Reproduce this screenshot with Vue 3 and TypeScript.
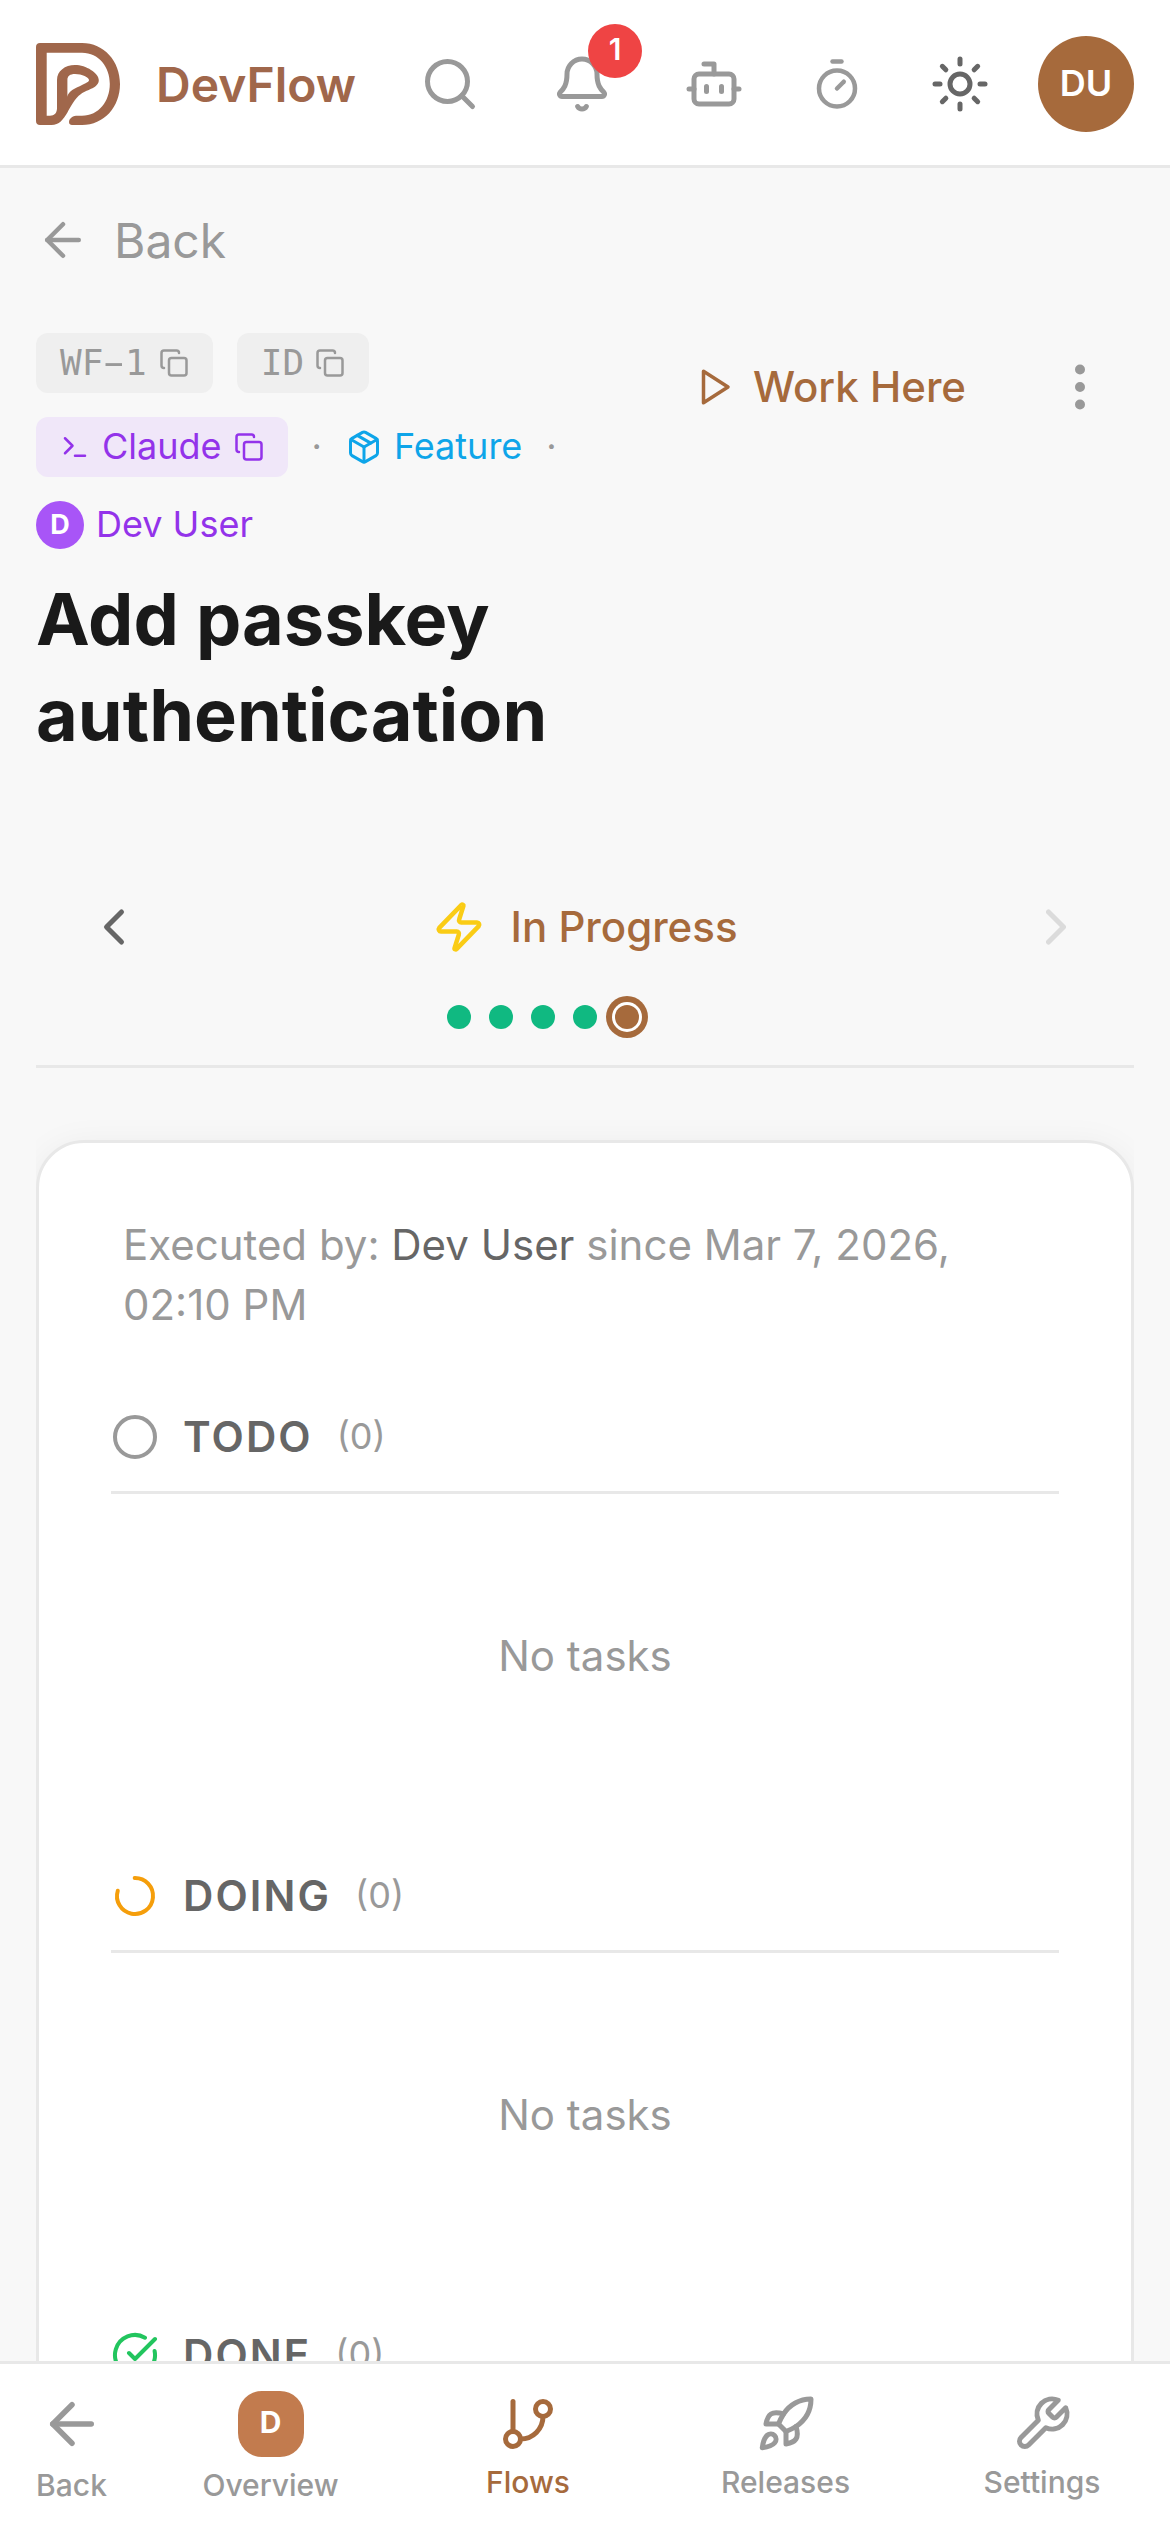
<script setup lang="ts">
interface Section {
  key: string
  label: string
  icon: string
  count: number
}

interface NavItem {
  label: string
  icon?: string
  initial?: string
  active?: boolean
}

const icons: Record<string, string> = {
  search: '<circle cx="11" cy="11" r="8"/><path d="m21 21-4.3-4.3"/>',
  bell: '<path d="M10.268 21a2 2 0 0 0 3.464 0"/><path d="M3.262 15.326A1 1 0 0 0 4 17h16a1 1 0 0 0 .74-1.673C19.41 13.956 18 12.499 18 8A6 6 0 0 0 6 8c0 4.499-1.411 5.956-2.738 7.326"/>',
  bot: '<path d="M12 8V4H8"/><rect width="16" height="12" x="4" y="8" rx="2"/><path d="M2 14h2"/><path d="M20 14h2"/><path d="M15 13v2"/><path d="M9 13v2"/>',
  timer: '<path d="M10 2h4"/><path d="m12 14 3-3"/><circle cx="12" cy="14" r="8"/>',
  sun: '<circle cx="12" cy="12" r="4"/><path d="M12 2v2"/><path d="M12 20v2"/><path d="m4.93 4.93 1.41 1.41"/><path d="m17.66 17.66 1.41 1.41"/><path d="M2 12h2"/><path d="M20 12h2"/><path d="m6.34 17.66-1.41 1.41"/><path d="m19.07 4.93-1.41 1.41"/>',
  arrowLeft: '<path d="m12 19-7-7 7-7"/><path d="M19 12H5"/>',
  copy: '<rect width="14" height="14" x="8" y="8" rx="2"/><path d="M4 16c-1.1 0-2-.9-2-2V4c0-1.1.9-2 2-2h10c1.1 0 2 .9 2 2"/>',
  terminal: '<path d="m4 17 6-6-6-6"/><path d="M12 19h8"/>',
  box: '<path d="M21 8a2 2 0 0 0-1-1.73l-7-4a2 2 0 0 0-2 0l-7 4A2 2 0 0 0 3 8v8a2 2 0 0 0 1 1.73l7 4a2 2 0 0 0 2 0l7-4A2 2 0 0 0 21 16Z"/><path d="m3.3 7 8.7 5 8.7-5"/><path d="M12 22V12"/><path d="m7.5 4.27 9 5.15"/>',
  play: '<path d="m6 3 14 9-14 9z"/>',
  more: '<circle cx="12" cy="12" r="1"/><circle cx="12" cy="5" r="1"/><circle cx="12" cy="19" r="1"/>',
  chevronLeft: '<path d="m15 18-6-6 6-6"/>',
  chevronRight: '<path d="m9 18 6-6-6-6"/>',
  zap: '<path d="M4 14a1 1 0 0 1-.78-1.63l9.9-10.2a.5.5 0 0 1 .86.46l-1.92 6.02A1 1 0 0 0 13 10h7a1 1 0 0 1 .78 1.63l-9.9 10.2a.5.5 0 0 1-.86-.46l1.92-6.02A1 1 0 0 0 11 14z"/>',
  todo: '<circle cx="12" cy="12" r="10"/>',
  doing: '<path d="M21 12a9 9 0 1 1-6.219-8.56" transform="rotate(-91 12 12)"/>',
  done: '<path d="M21.801 10A10 10 0 1 1 17 3.335"/><path d="m9 11 3 3L22 4"/>',
  branch: '<path d="M6 3v12"/><circle cx="18" cy="6" r="3"/><circle cx="6" cy="18" r="3"/><path d="M18 9a9 9 0 0 1-9 9"/>',
  rocket: '<path d="M4.5 16.5c-1.5 1.26-2 5-2 5s3.74-.5 5-2c.71-.84.7-2.13-.09-2.91a2.18 2.18 0 0 0-2.91-.09z"/><path d="m12 15-3-3a22 22 0 0 1 2-3.95A12.88 12.88 0 0 1 22 2c0 2.72-.78 7.5-6 11a22.35 22.35 0 0 1-4 2z"/><path d="M9 12H4s.55-3.03 2-4c1.62-1.08 5 0 5 0"/><path d="M12 15v5s3.03-.55 4-2c1.08-1.62 0-5 0-5"/>',
  wrench: '<path d="M14.7 6.3a1 1 0 0 0 0 1.4l1.6 1.6a1 1 0 0 0 1.4 0l3.77-3.77a6 6 0 0 1-7.94 7.94l-6.91 6.91a2.12 2.12 0 0 1-3-3l6.91-6.91a6 6 0 0 1 7.94-7.94l-3.76 3.76z"/>',
}

const steps: string[] = ['complete', 'complete', 'complete', 'complete', 'current']

const sections: Section[] = [
  { key: 'todo', label: 'TODO', icon: 'todo', count: 0 },
  { key: 'doing', label: 'DOING', icon: 'doing', count: 0 },
  { key: 'done', label: 'DONE', icon: 'done', count: 0 },
]

const navItems: NavItem[] = [
  { label: 'Overview', initial: 'D' },
  { label: 'Flows', icon: 'branch', active: true },
  { label: 'Releases', icon: 'rocket' },
  { label: 'Settings', icon: 'wrench' },
]
</script>

<template>
  <div class="app">
    <header class="topbar">
      <div class="brand">
        <svg class="logo" viewBox="0 0 84 84" fill-rule="evenodd">
          <path d="M4 1H46C68 1 84 19 84 42S68 83 46 83H36C32.500 83 32.500 79 34 77C36 74.500 38 73.700 40 73.700H46C63 73.700 73.800 59 73.800 42S63 10.700 46 10.700H10.700V73.700H14C18.500 73.700 21 71 21 66V38C21 29 29 23 39 23C50 23 62.800 31 62.800 38C62.800 46 52 47 45 52C32 61 31 83 15.500 83H4C1.500 83 0 81.500 0 79V5C0 2.500 1.500 1 4 1ZM31.400 54.700C32 49 40 46 46 43C52 40 53 39.500 53 38C53 35.500 46 32 39 32C34 32 31.400 34 31.400 38Z" />
        </svg>
        <span class="brand-name">DevFlow</span>
      </div>
      <div class="actions">
        <button class="tool"><svg class="icon s60" viewBox="0 0 24 24" v-html="icons.search" /></button>
        <button class="tool">
          <svg class="icon s60" viewBox="0 0 24 24" v-html="icons.bell" />
          <span class="badge">1</span>
        </button>
        <button class="tool"><svg class="icon s60" viewBox="0 0 24 24" v-html="icons.bot" /></button>
        <button class="tool narrow"><svg class="icon s54" viewBox="0 0 24 24" v-html="icons.timer" /></button>
        <button class="tool dark"><svg class="icon s60" viewBox="0 0 24 24" v-html="icons.sun" /></button>
        <span class="avatar">DU</span>
      </div>
    </header>

    <main class="content">
      <a class="back"><svg class="icon s54" viewBox="0 0 24 24" v-html="icons.arrowLeft" /><span>Back</span></a>

      <div class="heading">
        <div class="heading-main">
          <div class="meta">
            <div class="meta-row">
              <span class="chip mono"><span>WF<span class="dash">-</span>1</span><svg class="icon s30" viewBox="0 0 24 24" v-html="icons.copy" /></span>
              <span class="chip mono id">ID<svg class="icon s30" viewBox="0 0 24 24" v-html="icons.copy" /></span>
            </div>
            <div class="meta-row">
              <span class="chip agent">
                <svg class="icon s30" viewBox="0 0 24 24" v-html="icons.terminal" /><span class="label">Claude</span><svg class="icon s30" viewBox="0 0 24 24" v-html="icons.copy" />
              </span>
              <span class="label">·</span>
              <span class="kind"><svg class="icon s36" viewBox="0 0 24 24" v-html="icons.box" /><span class="label">Feature</span></span>
              <span class="label">·</span>
            </div>
            <div class="meta-row owner"><span class="owner-avatar">D</span><span class="label">Dev User</span></div>
          </div>
          <h1 class="title">Add passkey authentication</h1>
        </div>
        <div class="heading-actions">
          <button class="work"><svg class="icon s42" viewBox="0 0 24 24" v-html="icons.play" />Work Here</button>
          <button class="tool"><svg class="icon s60" viewBox="0 0 24 24" v-html="icons.more" /></button>
        </div>
      </div>

      <div class="stepper">
        <div class="stepper-row">
          <button class="tool dark"><svg class="icon s60" viewBox="0 0 24 24" v-html="icons.chevronLeft" /></button>
          <div class="stage"><svg class="icon s54 zap" viewBox="0 0 24 24" v-html="icons.zap" />In Progress</div>
          <button class="tool disabled"><svg class="icon s60" viewBox="0 0 24 24" v-html="icons.chevronRight" /></button>
        </div>
        <div class="dots">
          <span v-for="(s, i) in steps" :key="i" class="dot" :class="s" />
        </div>
      </div>

      <div class="panel-wrap">
        <section class="panel">
          <p class="executed">Executed by: <span class="who">Dev User</span> since Mar 7, 2026, 02:10 PM</p>
          <div v-for="s in sections" :key="s.key" class="group">
            <div class="group-head">
              <svg class="icon s48" :class="s.key" viewBox="0 0 24 24" v-html="icons[s.icon]" />
              <span class="group-label">{{ s.label }}</span>
              <span class="group-count">({{ s.count }})</span>
            </div>
            <div class="empty">No tasks</div>
          </div>
        </section>
      </div>
    </main>

    <nav class="tabbar">
      <a class="tab tab-back"><svg class="icon s66" viewBox="0 0 24 24" v-html="icons.arrowLeft" /><span>Back</span></a>
      <a v-for="n in navItems" :key="n.label" class="tab" :class="{ active: n.active }">
        <span v-if="n.initial" class="tile">{{ n.initial }}</span>
        <svg v-else class="icon s60" viewBox="0 0 24 24" v-html="icons[n.icon ?? '']" />
        <span>{{ n.label }}</span>
      </a>
    </nav>
  </div>
</template>

<style>
body {
  margin: 0;
  background: #f8f8f8;
}
</style>

<style scoped>
.app {
  --brown: #a66a3c;
  --muted: #999;
  --line: #e8e8e8;
  display: flex;
  flex-direction: column;
  width: 1170px;
  height: 2532px;
  overflow: hidden;
  background: #f8f8f8;
  color: var(--muted);
  font-family: Inter, sans-serif;
}
button {
  margin: 0;
  padding: 0;
  border: 0;
  background: none;
  font: inherit;
  color: inherit;
}
.icon {
  display: block;
  flex: none;
  fill: none;
  stroke: currentColor;
  stroke-width: 2;
  stroke-linecap: round;
  stroke-linejoin: round;
}
.s30 { width: 30px; height: 30px; }
.s36 { width: 36px; height: 36px; }
.s42 { width: 42px; height: 42px; }
.s48 { width: 48px; height: 48px; }
.s54 { width: 54px; height: 54px; }
.s60 { width: 60px; height: 60px; }
.s66 { width: 66px; height: 66px; }

.topbar {
  flex: none;
  box-sizing: border-box;
  height: 168px;
  padding: 0 36px;
  border-bottom: 3px solid var(--line);
  background: #fff;
  display: flex;
  justify-content: space-between;
  align-items: flex-start;
}
.brand {
  display: flex;
  align-items: center;
  gap: 36px;
  height: 168px;
}
.logo {
  width: 84px;
  height: 84px;
  fill: #a0674b;
}
.brand-name {
  font-size: 48px;
  font-weight: 600;
  color: #a0674b;
}
.actions {
  display: flex;
  align-items: center;
  gap: 24px;
  height: 168px;
}
.tool {
  position: relative;
  width: 108px;
  height: 108px;
  display: flex;
  align-items: center;
  justify-content: center;
}
.tool.narrow { width: 90px; }
.tool.dark { color: #666; }
.tool.disabled { opacity: 0.3; }
.badge {
  position: absolute;
  top: -6px;
  right: -6px;
  width: 54px;
  height: 54px;
  border-radius: 50%;
  background: #ef4444;
  color: #fff;
  font-size: 30px;
  font-weight: 600;
  line-height: 50px;
  text-align: center;
}
.avatar {
  width: 96px;
  height: 96px;
  border-radius: 50%;
  background: var(--brown);
  color: #fff;
  font-size: 36px;
  font-weight: 600;
  line-height: 94px;
  text-align: center;
}

.content {
  flex: 1;
  min-height: 0;
  overflow: hidden;
  padding: 36px 36px 0;
}
.back {
  display: flex;
  align-items: center;
  gap: 24px;
  height: 72px;
  font-size: 48px;
}
.heading {
  display: flex;
  align-items: flex-start;
  justify-content: space-between;
  margin-top: 57px;
}
.heading-main {
  width: 590px;
}
.meta {
  display: flex;
  flex-direction: column;
  gap: 24px;
  font-size: 36px;
  line-height: 48px;
}
.meta-row {
  display: flex;
  align-items: center;
  gap: 24px;
}
.label {
  margin-top: -2px;
}
.chip {
  display: flex;
  align-items: center;
  gap: 12px;
  height: 60px;
  padding: 0 24px;
  border-radius: 12px;
  background: #efefef;
}
.mono { font-family: "DejaVu Sans Mono", monospace; }
.chip.id { gap: 11px; }
.dash {
  display: inline-block;
  transform: translateY(-1.5px) scaleX(1.8);
}
.agent {
  background: #f0e7f9;
  color: #9333ea;
}
.kind {
  display: flex;
  align-items: center;
  gap: 12px;
  color: #0ea5e9;
}
.owner {
  gap: 12px;
  color: #9333ea;
}
.owner-avatar {
  width: 48px;
  height: 48px;
  border-radius: 50%;
  background: #a855f7;
  color: #fff;
  font-size: 27px;
  font-weight: 700;
  line-height: 47px;
  text-align: center;
}
.title {
  margin: 22px 0 0;
  font-size: 72px;
  line-height: 96px;
  font-weight: 700;
  color: #1a1a1a;
}
.heading-actions {
  display: flex;
  align-items: center;
  gap: 60px;
}
.work {
  display: flex;
  align-items: center;
  gap: 18px;
  height: 108px;
  font-size: 42px;
  font-weight: 500;
  line-height: 60px;
  color: var(--brown);
  white-space: nowrap;
}

.stepper {
  margin-top: 110px;
  padding-bottom: 36px;
  border-bottom: 3px solid var(--line);
}
.stepper-row {
  display: flex;
  align-items: center;
  justify-content: space-between;
  padding: 0 24px;
}
.stage {
  display: flex;
  align-items: center;
  gap: 24px;
  font-size: 42px;
  font-weight: 500;
  line-height: 60px;
  color: var(--brown);
}
.zap { color: #facc15; }
.dots {
  display: flex;
  gap: 18px;
  width: 276px;
  margin: 24px auto 0;
}
.dot {
  width: 24px;
  height: 24px;
  border-radius: 50%;
}
.complete { background: #10b981; }
.current {
  background: var(--brown);
  box-shadow: 0 0 0 3px #fff, 0 0 0 9px var(--brown);
}

.panel-wrap {
  overflow: hidden;
  padding-top: 72px;
}
.panel {
  box-sizing: border-box;
  height: 1600px;
  padding: 72px;
  border: 3px solid var(--line);
  border-radius: 48px;
  background: #fff;
  box-shadow: 0 6px 36px rgba(0, 0, 0, 0.06);
}
.executed {
  margin: 0;
  padding: 0 12px;
  font-size: 42px;
  line-height: 60px;
}
.who { color: #666; }
.group {
  height: 387px;
  margin-top: 72px;
}
.group-head {
  display: flex;
  align-items: center;
  gap: 24px;
  height: 60px;
  padding-bottom: 24px;
  border-bottom: 3px solid var(--line);
}
.todo { color: #999; }
.doing { color: #f59e0b; }
.done { color: #22c55e; }
.group-label {
  font-size: 42px;
  font-weight: 600;
  line-height: 60px;
  letter-spacing: 2.1px;
  color: #666;
}
.group-count {
  margin-top: -2px;
  font-size: 36px;
  line-height: 48px;
}
.empty {
  padding-top: 132px;
  font-size: 42px;
  line-height: 60px;
  text-align: center;
}

.tabbar {
  flex: none;
  box-sizing: border-box;
  height: 171px;
  border-top: 3px solid var(--line);
  background: #fff;
  display: grid;
  grid-template-columns: 142px 257px 258px 257px 256px;
  align-items: center;
}
.tab {
  display: flex;
  flex-direction: column;
  align-items: center;
  gap: 9px;
  font-size: 30px;
  line-height: 39px;
  font-weight: 500;
}
.tab-back {
  box-sizing: border-box;
  width: 143px;
}
.tab.active { color: var(--brown); }
.tile {
  width: 66px;
  height: 66px;
  border-radius: 24px;
  background: #c27b4e;
  color: #fff;
  font-size: 30px;
  font-weight: 700;
  line-height: 62px;
  text-align: center;
}
</style>
